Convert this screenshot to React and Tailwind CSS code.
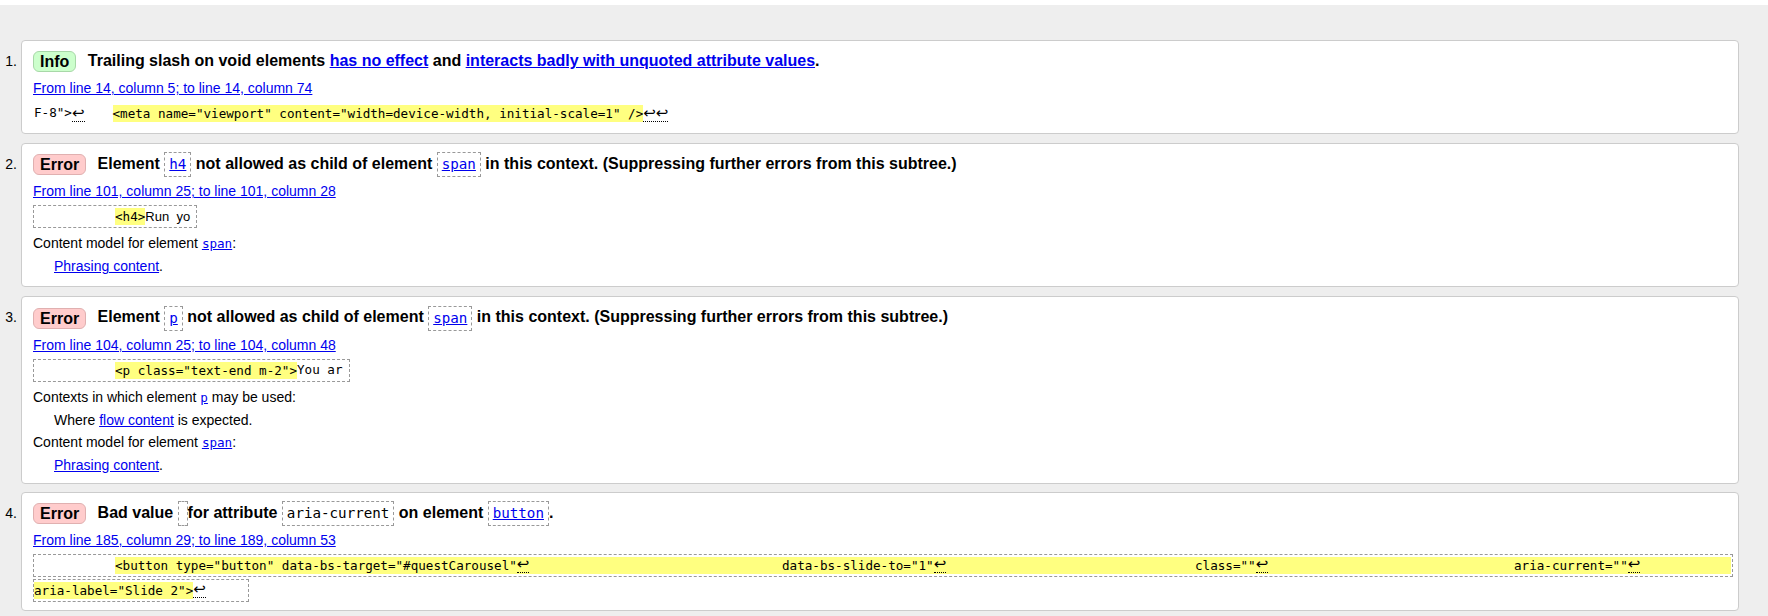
import React from "react";

const mono = "font-['DejaVu_Sans_Mono',monospace]";

// return-arrow glyph the validator shows for line breaks
function Ret({ dotted = true }) {
  return (
    <span
      className={`inline-block font-['DejaVu_Sans',sans-serif] text-[15px] leading-[15px] ${
        dotted ? "border-b border-dotted border-black" : ""
      }`}
    >
      ↩
    </span>
  );
}

function Badge({ kind }) {
  const styles =
    kind === "Info"
      ? "bg-[#ccffcc] border-[#a8d8a8]"
      : "bg-[#ffcccc] border-[#e0b0b0]";
  return (
    <span
      className={`inline-block align-middle h-[21px] leading-[19px] px-[6px] rounded-[6px] border ${styles} mr-[7px]`}
    >
      {kind}
    </span>
  );
}

function TitleCode({ children, link = false }) {
  return (
    <code
      className={`inline-block align-middle h-[25px] leading-[23px] px-[4px] border border-dashed border-[#999999] font-normal text-[14.2px] ${mono}`}
    >
      {link ? <a className="text-[#0000ee] underline">{children}</a> : children}
    </code>
  );
}

function Item({ n, children, pb = "pb-[8px]", mb = "mb-[9px]" }) {
  return (
    <div className={`flex ${mb}`}>
      <div className="w-[21px] shrink-0 pt-[9px] pr-[4px] text-right text-[14px] leading-[25px]">
        {n}.
      </div>
      <div className={`flex-1 bg-white border border-[#cccccc] rounded-[4px] pl-[11px] pr-[5px] pt-[8px] ${pb}`}>
        {children}
      </div>
    </div>
  );
}

function Location({ children }) {
  return (
    <div className="mt-[3px] text-[14px] leading-[22px]">
      <a className="text-[#0000ee] underline">{children}</a>
    </div>
  );
}

function Line({ indent = false, children }) {
  return (
    <div className={`text-[14px] leading-[22px] ${indent ? "pl-[21px]" : ""}`}>
      {children}
    </div>
  );
}

function MonoLink({ children }) {
  return <a className={`text-[#0000ee] underline text-[12.6px] ${mono}`}>{children}</a>;
}

const hl = "bg-[#ffff80] h-[17px] leading-[17px] whitespace-pre";

export default function App() {
  return (
    <div className="w-[1768px] font-['Liberation_Sans',Arial,sans-serif] text-black">
      <div className="h-[5px] bg-white" />
      <div className="bg-[#eeeeee] pt-[35px] pr-[29px] pb-[8px]">
        {/* 1. Info */}
        <Item n={1}>
          <div className="text-[16px] font-bold leading-[24px] min-h-[25px]">
            <Badge kind="Info" /> Trailing slash on void elements{" "}
            <a className="text-[#0000ee] underline">has no effect</a> and{" "}
            <a className="text-[#0000ee] underline">interacts badly with unquoted attribute values</a>.
          </div>
          <Location>From line 14, column 5; to line 14, column 74</Location>
          <div className={`mt-[3px] flex items-center h-[23px] border border-transparent text-[12.6px] ${mono}`}>
            <span className="whitespace-pre">F-8"&gt;</span>
            <Ret />
            <span className="w-[28px] shrink-0" />
            <span className={hl}>{'<meta name="viewport" content="width=device-width, initial-scale=1" />'}</span>
            <span className="border-b border-dotted border-black flex">
              <Ret dotted={false} />
              <Ret dotted={false} />
            </span>
          </div>
        </Item>

        {/* 2. Error h4 */}
        <Item n={2} pb="pb-[9px]">
          <div className="text-[16px] font-bold leading-[24px] min-h-[25px]">
            <Badge kind="Error" /> Element <TitleCode link>h4</TitleCode> not allowed as child of element{" "}
            <TitleCode link>span</TitleCode> in this context. (Suppressing further errors from this subtree.)
          </div>
          <Location>From line 101, column 25; to line 101, column 28</Location>
          <div className={`mt-[3px] w-[164px] flex items-center h-[23px] border border-dashed border-[#999999] text-[12.6px] ${mono}`}>
            <span className="w-[81px] shrink-0" />
            <span className={hl}>&lt;h4&gt;</span>
            <span className="whitespace-pre text-[13px] font-['Liberation_Sans',Arial,sans-serif]">Run  yo</span>
          </div>
          <div className="mt-[4px]">
            <Line>
              Content model for element <MonoLink>span</MonoLink>:
            </Line>
            <Line indent>
              <a className="text-[#0000ee] underline">Phrasing content</a>.
            </Line>
          </div>
        </Item>

        {/* 3. Error p */}
        <Item n={3} pb="pb-[7px]" mb="mb-[8px]">
          <div className="text-[16px] font-bold leading-[24px] min-h-[25px]">
            <Badge kind="Error" /> Element <TitleCode link>p</TitleCode> not allowed as child of element{" "}
            <TitleCode link>span</TitleCode> in this context. (Suppressing further errors from this subtree.)
          </div>
          <Location>From line 104, column 25; to line 104, column 48</Location>
          <div className={`mt-[3px] w-[317px] flex items-center h-[23px] border border-dashed border-[#999999] text-[12.6px] ${mono}`}>
            <span className="w-[81px] shrink-0" />
            <span className={hl}>{'<p class="text-end m-2">'}</span>
            <span className="whitespace-pre">You ar</span>
          </div>
          <div className="mt-[4px]">
            <Line>
              Contexts in which element <MonoLink>p</MonoLink> may be used:
            </Line>
            <Line indent>
              Where <a className="text-[#0000ee] underline">flow content</a> is expected.
            </Line>
            <Line>
              Content model for element <MonoLink>span</MonoLink>:
            </Line>
            <Line indent>
              <a className="text-[#0000ee] underline">Phrasing content</a>.
            </Line>
          </div>
        </Item>

        {/* 4. Error aria-current */}
        <Item n={4}>
          <div className="text-[16px] font-bold leading-[24px] min-h-[25px]">
            <Badge kind="Error" /> Bad value <TitleCode>{""}</TitleCode>for attribute{" "}
            <TitleCode>aria-current</TitleCode> on element <TitleCode link>button</TitleCode>.
          </div>
          <Location>From line 185, column 29; to line 189, column 53</Location>
          <div className={`mt-[3px] flex items-center h-[23px] border border-dashed border-[#999999] text-[12.6px] ${mono}`}>
            <span className="w-[81px] shrink-0" />
            <div className="flex-1 flex items-center bg-[#ffff80] h-[17px] leading-[17px] mr-[1px]">
              <span className="w-[667px] shrink-0 flex items-center">
                <span className="whitespace-pre">{'<button type="button" data-bs-target="#questCarousel"'}</span>
                <Ret />
              </span>
              <span className="w-[413px] shrink-0 flex items-center">
                <span className="whitespace-pre">data-bs-slide-to="1"</span>
                <Ret />
              </span>
              <span className="w-[319px] shrink-0 flex items-center">
                <span className="whitespace-pre">class=""</span>
                <Ret />
              </span>
              <span className="flex items-center">
                <span className="whitespace-pre">aria-current=""</span>
                <Ret />
              </span>
            </div>
          </div>
          <div className={`mt-[2px] w-[216px] flex items-center h-[23px] border border-dashed border-[#999999] text-[12.6px] ${mono}`}>
            <span className={hl}>aria-label="Slide 2"&gt;</span>
            <Ret />
          </div>
        </Item>
      </div>
    </div>
  );
}
